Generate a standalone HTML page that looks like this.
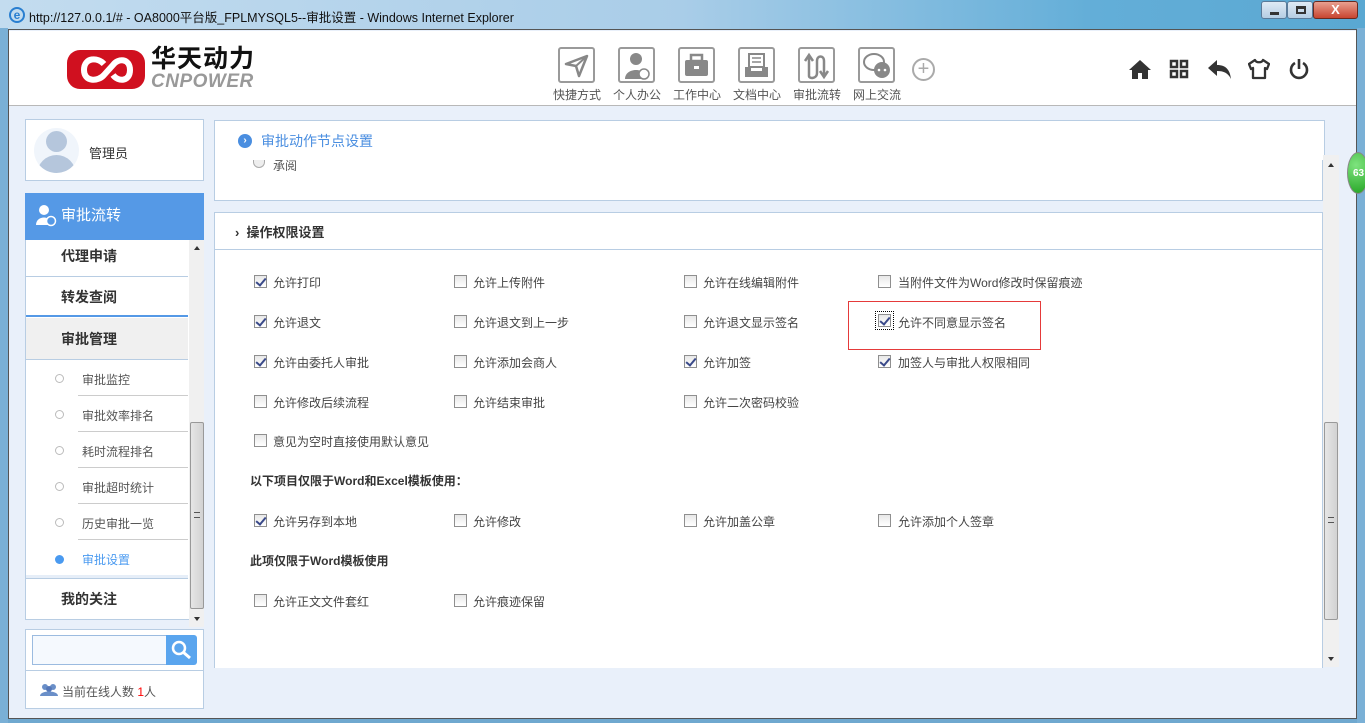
<!DOCTYPE html>
<html><head><meta charset="utf-8">
<style>
*{margin:0;padding:0;box-sizing:border-box}
body{width:1365px;height:723px;overflow:hidden;position:relative;background:#6fa8cf;font-family:"Liberation Sans","Noto Sans CJK SC",sans-serif;font-size:12px;color:#444}
.a{position:absolute}
.cb{position:absolute;width:13px;height:13px;border:1px solid #8f8f8f;background:linear-gradient(#e8e8e8,#fff)}
.cb.on::after{content:"";position:absolute;left:3px;top:0px;width:4px;height:8px;border:solid #3a4a8a;border-width:0 2px 2px 0;transform:rotate(40deg)}
.lb{position:absolute;font-size:12px;color:#444;white-space:nowrap}
.bt{position:absolute;font-size:12px;font-weight:bold;color:#333;white-space:nowrap}
.ib{position:absolute;top:47px;width:37px;height:36px;border:2px solid #9a9a9a;border-radius:3px;background:#fff}
.il{position:absolute;top:86px;font-size:12px;color:#555;white-space:nowrap}
.mi{position:absolute;left:26px;width:162px;font-size:14px;font-weight:bold;color:#333;padding-left:35px;border-bottom:1px solid #b8cde3}
.si{position:absolute;left:82px;font-size:12px;color:#555}
.sd{position:absolute;left:55px;width:9px;height:9px;border:1px solid #bbb;border-radius:50%;background:#fff}
.sl{position:absolute;left:78px;width:110px;height:1px;background:#ccc}
</style></head><body>
<div class="a" style="left:0;top:0;width:1365px;height:30px;background:linear-gradient(90deg,#c3dcef 0%,#a9cde8 50%,#63aed8 80%,#5aa8d2 100%)"></div>
<div class="a" style="left:9px;top:7px;width:16px;height:16px;border-radius:50%;border:2px solid #2a7fd0;color:#2a7fd0;font-size:12px;line-height:12px;text-align:center;font-weight:bold">e</div>
<div class="a" style="left:29px;top:7px;font-size:12.5px;color:#111">http://127.0.0.1/# - OA8000平台版_FPLMYSQL5--审批设置 - Windows Internet Explorer</div>
<div class="a" style="left:1261px;top:1px;width:26px;height:18px;border:1px solid #5a7a99;border-radius:3px;background:linear-gradient(#dfeaf5,#b5cde3)"><div style="position:absolute;left:8px;top:10px;width:9px;height:3px;background:#333"></div></div>
<div class="a" style="left:1287px;top:1px;width:26px;height:18px;border:1px solid #5a7a99;border-radius:3px;background:linear-gradient(#dfeaf5,#b5cde3)"><div style="position:absolute;left:8px;top:4px;width:10px;height:8px;border:2px solid #333;border-top-width:3px"></div></div>
<div class="a" style="left:1313px;top:1px;width:45px;height:18px;border:1px solid #6a2a20;border-radius:3px;background:linear-gradient(#e8a090,#c84530);color:#fff;font-weight:bold;font-size:13px;text-align:center;line-height:16px">X</div>
<div class="a" style="left:0;top:28px;width:8px;height:695px;background:#7ab0d6"></div>
<div class="a" style="left:1357px;top:28px;width:8px;height:695px;background:#7ab0d6"></div>
<div class="a" style="left:8px;top:29px;width:1349px;height:690px;background:#e9f0fa;border:1px solid #555"></div>
<div class="a" style="left:9px;top:31px;width:1347px;height:75px;background:#fff;border-bottom:1px solid #b8b8b8"></div>
<div class="a" style="left:67px;top:50px;width:78px;height:39px;border-radius:13px;background:#d0101f"></div>
<svg class="a" style="left:67px;top:50px" width="78" height="39"><g fill="none" stroke="#fff" stroke-width="6"><path d="M37 14 C31 7 17 7 17 20 C17 32 31 32 37 25 L46 15 C51 8 63 8 63 20 C63 32 51 32 46 25"/></g></svg>
<div class="a" style="left:151px;top:44px;font-size:25px;font-weight:bold;color:#111;letter-spacing:1px;line-height:30px">华天动力</div>
<div class="a" style="left:151px;top:71px;font-size:19px;font-weight:bold;font-style:italic;color:#999;letter-spacing:0.5px;line-height:22px">CNPOWER</div>
<div class="ib" style="left:558px"><svg width="33" height="32"><path d="M27 7 L6 15 L16 17 L19 27 Z" fill="none" stroke="#888" stroke-width="2.5" stroke-linejoin="round"/><path d="M16 17 L27 7" stroke="#888" stroke-width="2"/></svg></div>
<div class="ib" style="left:618px"><svg width="33" height="32"><circle cx="16" cy="10" r="6" fill="#888"/><path d="M5 30 C5 18 27 18 27 30Z" fill="#888"/><circle cx="24" cy="25" r="5" fill="#fff" stroke="#888" stroke-width="1.5"/></svg></div>
<div class="ib" style="left:678px"><svg width="33" height="32"><rect x="5" y="11" width="23" height="16" rx="2" fill="#888"/><rect x="11" y="6" width="11" height="6" fill="none" stroke="#888" stroke-width="2.5"/><rect x="14" y="17" width="5" height="3" fill="#fff"/></svg></div>
<div class="ib" style="left:738px"><svg width="33" height="32"><path d="M5 18 L5 28 L28 28 L28 18 L22 18 L22 22 L11 22 L11 18Z" fill="#888"/><rect x="9" y="5" width="15" height="13" fill="none" stroke="#888" stroke-width="2"/><path d="M12 9h9M12 13h9" stroke="#888" stroke-width="1.5"/></svg></div>
<div class="ib" style="left:798px"><svg width="33" height="32"><path d="M9 27 V8 M5 12 L9 6 L13 12 M9 27 C9 30 17 30 17 24 V12 C17 6 24 6 24 12 V26 M20 22 L24 28 L28 22" fill="none" stroke="#888" stroke-width="2.5"/></svg></div>
<div class="ib" style="left:858px"><svg width="33" height="32"><ellipse cx="14" cy="13" rx="10" ry="8" fill="none" stroke="#888" stroke-width="2"/><circle cx="22" cy="21" r="8" fill="#888"/><circle cx="19" cy="21" r="1.3" fill="#fff"/><circle cx="25" cy="21" r="1.3" fill="#fff"/></svg></div>
<div class="a" style="left:912px;top:58px;width:23px;height:23px;border:2px solid #aaa;border-radius:50%;color:#aaa;font-size:20px;line-height:18px;text-align:center">+</div>
<div class="il" style="left:553px">快捷方式</div><div class="il" style="left:613px">个人办公</div><div class="il" style="left:673px">工作中心</div><div class="il" style="left:733px">文档中心</div><div class="il" style="left:793px">审批流转</div><div class="il" style="left:853px">网上交流</div>
<svg class="a" style="left:1128px;top:58px" width="24" height="22"><path d="M12 2 L1 12 L4 12 L4 21 L10 21 L10 15 L14 15 L14 21 L20 21 L20 12 L23 12Z" fill="#333"/></svg>
<svg class="a" style="left:1169px;top:59px" width="20" height="20"><g fill="none" stroke="#333" stroke-width="2.5"><rect x="2" y="2" width="6" height="6"/><rect x="12" y="2" width="6" height="6"/><rect x="2" y="12" width="6" height="6"/><rect x="12" y="12" width="6" height="6"/></g></svg>
<svg class="a" style="left:1207px;top:58px" width="26" height="22"><path d="M10 2 L1 10 L10 18 L10 13 C17 13 21 15 24 21 C23 12 19 7 10 7Z" fill="#333"/></svg>
<svg class="a" style="left:1248px;top:58px" width="22" height="22"><path d="M7 2 L1 6 L3 11 L5 10 L5 20 L17 20 L17 10 L19 11 L21 6 L15 2 C14 5 8 5 7 2Z" fill="none" stroke="#333" stroke-width="2.3" stroke-linejoin="round"/></svg>
<svg class="a" style="left:1289px;top:58px" width="20" height="22"><path d="M6 5 A8 8 0 1 0 14 5" fill="none" stroke="#333" stroke-width="2.6"/><path d="M10 1 V11" stroke="#333" stroke-width="2.6"/></svg>
<div class="a" style="left:25px;top:119px;width:179px;height:62px;background:#fff;border:1px solid #b8cde3"></div>
<div class="a" style="left:34px;top:128px;width:45px;height:45px;border-radius:50%;background:#f0f5fb;overflow:hidden"><div style="position:absolute;left:12px;top:3px;width:21px;height:21px;border-radius:50%;background:#b5c6dc"></div><div style="position:absolute;left:3px;top:27px;width:39px;height:22px;border-radius:20px 20px 0 0;background:#b5c6dc"></div></div>
<div class="a" style="left:89px;top:143px;font-size:13px;color:#333">管理员</div>
<div class="a" style="left:25px;top:193px;width:179px;height:47px;background:#5599e6"></div>
<svg class="a" style="left:35px;top:203px" width="22" height="24"><circle cx="9" cy="7" r="5" fill="#fff"/><path d="M1 22 C1 12 17 12 17 22Z" fill="#fff"/><circle cx="16" cy="18" r="4.5" fill="#5599e6" stroke="#fff" stroke-width="1.5"/></svg>
<div class="a" style="left:61px;top:204px;font-size:15px;color:#fff">审批流转</div>
<div class="a" style="left:25px;top:240px;width:179px;height:380px;background:#fff;border:1px solid #b8cde3;border-top:none"></div>
<div class="mi" style="top:240px;height:37px;line-height:32px">代理申请</div>
<div class="mi" style="top:277px;height:40px;line-height:40px;border-bottom:2px solid #5599e6">转发查阅</div>
<div class="mi" style="top:318px;height:42px;line-height:42px;background:#f0f0f0">审批管理</div>
<div class="sd" style="top:374px"></div><div class="si" style="top:371px">审批监控</div><div class="sl" style="top:395px"></div>
<div class="sd" style="top:410px"></div><div class="si" style="top:407px">审批效率排名</div><div class="sl" style="top:431px"></div>
<div class="sd" style="top:446px"></div><div class="si" style="top:443px">耗时流程排名</div><div class="sl" style="top:467px"></div>
<div class="sd" style="top:482px"></div><div class="si" style="top:479px">审批超时统计</div><div class="sl" style="top:503px"></div>
<div class="sd" style="top:518px"></div><div class="si" style="top:515px">历史审批一览</div><div class="sl" style="top:539px"></div>
<div class="a" style="left:55px;top:555px;width:9px;height:9px;border-radius:50%;background:#4a9af0"></div><div class="si" style="top:551px;color:#4a9af0">审批设置</div>
<div class="a" style="left:26px;top:575px;width:162px;height:3px;background:#e6eef8"></div>
<div class="mi" style="top:578px;height:41px;line-height:40px;border-bottom:none;border-top:1px solid #b8cde3">我的关注</div>
<div class="a" style="left:189px;top:240px;width:15px;height:387px;background:#f0f0f0"></div>
<div class="a" style="left:194px;top:246px;width:0;height:0;border:3px solid transparent;border-bottom:4px solid #333;border-top:none"></div>
<div class="a" style="left:190px;top:422px;width:14px;height:187px;border:1px solid #999;border-radius:2px;background:linear-gradient(90deg,#e6e6e6,#d2d2d2)"></div>
<div class="a" style="left:194px;top:512px;width:6px;height:6px;border-top:1px solid #555;border-bottom:1px solid #555"></div>
<div class="a" style="left:194px;top:617px;width:0;height:0;border:3px solid transparent;border-top:4px solid #333;border-bottom:none"></div>
<div class="a" style="left:25px;top:629px;width:179px;height:80px;background:#fff;border:1px solid #b8cde3"></div>
<div class="a" style="left:25px;top:670px;width:179px;height:1px;background:#b8cde3"></div>
<div class="a" style="left:32px;top:635px;width:135px;height:30px;background:#f5f9fe;border:1px solid #9bbbe0"></div>
<div class="a" style="left:166px;top:635px;width:31px;height:30px;background:#5aa5ee;border-radius:0 3px 3px 0"></div>
<svg class="a" style="left:170px;top:639px" width="24" height="22"><circle cx="9" cy="9" r="6" fill="none" stroke="#fff" stroke-width="2.5"/><path d="M13 13 L20 19" stroke="#fff" stroke-width="3"/></svg>
<svg class="a" style="left:40px;top:683px" width="18" height="14"><circle cx="5" cy="4" r="3" fill="#6a8fc8"/><circle cx="13" cy="4" r="3" fill="#6a8fc8"/><circle cx="9" cy="6" r="3" fill="#5577b8"/><path d="M0 13 C0 7 18 7 18 13Z" fill="#6a8fc8"/></svg>
<div class="a" style="left:62px;top:683px;font-size:12px;color:#555">当前在线人数 <span style="color:#f00">1</span>人</div>
<div class="a" style="left:214px;top:120px;width:1111px;height:41px;background:#fff;border:1px solid #b8cde3"></div>
<div class="a" style="left:238px;top:134px;width:14px;height:14px;border-radius:50%;background:#4a8ee0;color:#fff;font-size:10px;line-height:13px;text-align:center;font-weight:bold">›</div>
<div class="a" style="left:261px;top:131px;font-size:14px;color:#4a8ee0">审批动作节点设置</div>
<div class="a" style="left:214px;top:160px;width:1109px;height:41px;background:#fff;border:1px solid #b8cde3;border-top:none"></div>
<div class="a" style="left:253px;top:160px;width:12px;height:8px;border:1px solid #aaa;border-top:none;border-radius:0 0 6px 6px;background:#eee"></div>
<div class="a" style="left:273px;top:157px;font-size:12px;color:#555;height:14px;overflow:hidden;line-height:18px">承阅</div>
<div class="a" style="left:214px;top:212px;width:1109px;height:456px;background:#fff;border:1px solid #b8cde3;border-bottom:none"></div>
<div class="a" style="left:214px;top:249px;width:1109px;height:1px;background:#b8cde3"></div>
<div class="a" style="left:235px;top:222px;font-size:13px;font-weight:bold;color:#333">›&nbsp; 操作权限设置</div>
<div class="a" style="left:1323px;top:155px;width:16px;height:512px;background:#f0f0f0"></div>
<div class="a" style="left:1328px;top:163px;width:0;height:0;border:3px solid transparent;border-bottom:4px solid #333;border-top:none"></div>
<div class="a" style="left:1324px;top:422px;width:14px;height:198px;border:1px solid #999;border-radius:2px;background:linear-gradient(90deg,#e6e6e6,#d2d2d2)"></div>
<div class="a" style="left:1328px;top:517px;width:6px;height:6px;border-top:1px solid #555;border-bottom:1px solid #555"></div>
<div class="a" style="left:1328px;top:657px;width:0;height:0;border:3px solid transparent;border-top:4px solid #333;border-bottom:none"></div>
<div class="a" style="left:1347px;top:152px;width:22px;height:42px;border-radius:50%;background:radial-gradient(circle at 40% 30%,#7ee37e,#25a525);border:1px solid #888;color:#fff;font-size:10px;font-weight:bold;line-height:42px;padding-left:5px">63</div>
<div class="cb on" style="left:254px;top:275px"></div><div class="lb" style="left:273px;top:274px">允许打印</div>
<div class="cb" style="left:454px;top:275px"></div><div class="lb" style="left:473px;top:274px">允许上传附件</div>
<div class="cb" style="left:684px;top:275px"></div><div class="lb" style="left:703px;top:274px">允许在线编辑附件</div>
<div class="cb" style="left:878px;top:275px"></div><div class="lb" style="left:898px;top:274px">当附件文件为Word修改时保留痕迹</div>
<div class="cb on" style="left:254px;top:315px"></div><div class="lb" style="left:273px;top:314px">允许退文</div>
<div class="cb" style="left:454px;top:315px"></div><div class="lb" style="left:473px;top:314px">允许退文到上一步</div>
<div class="cb" style="left:684px;top:315px"></div><div class="lb" style="left:703px;top:314px">允许退文显示签名</div>
<div class="a" style="left:875px;top:311px;width:19px;height:19px;border:1px dotted #000"></div>
<div class="cb on" style="left:878px;top:314px"></div><div class="lb" style="left:898px;top:314px">允许不同意显示签名</div>
<div class="a" style="left:848px;top:301px;width:193px;height:49px;border:1px solid #e53a3a"></div>
<div class="cb on" style="left:254px;top:355px"></div><div class="lb" style="left:273px;top:354px">允许由委托人审批</div>
<div class="cb" style="left:454px;top:355px"></div><div class="lb" style="left:473px;top:354px">允许添加会商人</div>
<div class="cb on" style="left:684px;top:355px"></div><div class="lb" style="left:703px;top:354px">允许加签</div>
<div class="cb on" style="left:878px;top:355px"></div><div class="lb" style="left:898px;top:354px">加签人与审批人权限相同</div>
<div class="cb" style="left:254px;top:395px"></div><div class="lb" style="left:273px;top:394px">允许修改后续流程</div>
<div class="cb" style="left:454px;top:395px"></div><div class="lb" style="left:473px;top:394px">允许结束审批</div>
<div class="cb" style="left:684px;top:395px"></div><div class="lb" style="left:703px;top:394px">允许二次密码校验</div>
<div class="cb" style="left:254px;top:434px"></div><div class="lb" style="left:273px;top:433px">意见为空时直接使用默认意见</div>
<div class="bt" style="left:250px;top:472px">以下项目仅限于Word和Excel模板使用：</div>
<div class="cb on" style="left:254px;top:514px"></div><div class="lb" style="left:273px;top:513px">允许另存到本地</div>
<div class="cb" style="left:454px;top:514px"></div><div class="lb" style="left:473px;top:513px">允许修改</div>
<div class="cb" style="left:684px;top:514px"></div><div class="lb" style="left:703px;top:513px">允许加盖公章</div>
<div class="cb" style="left:878px;top:514px"></div><div class="lb" style="left:898px;top:513px">允许添加个人签章</div>
<div class="bt" style="left:250px;top:552px">此项仅限于Word模板使用</div>
<div class="cb" style="left:254px;top:594px"></div><div class="lb" style="left:273px;top:593px">允许正文文件套红</div>
<div class="cb" style="left:454px;top:594px"></div><div class="lb" style="left:473px;top:593px">允许痕迹保留</div>
</body></html>
